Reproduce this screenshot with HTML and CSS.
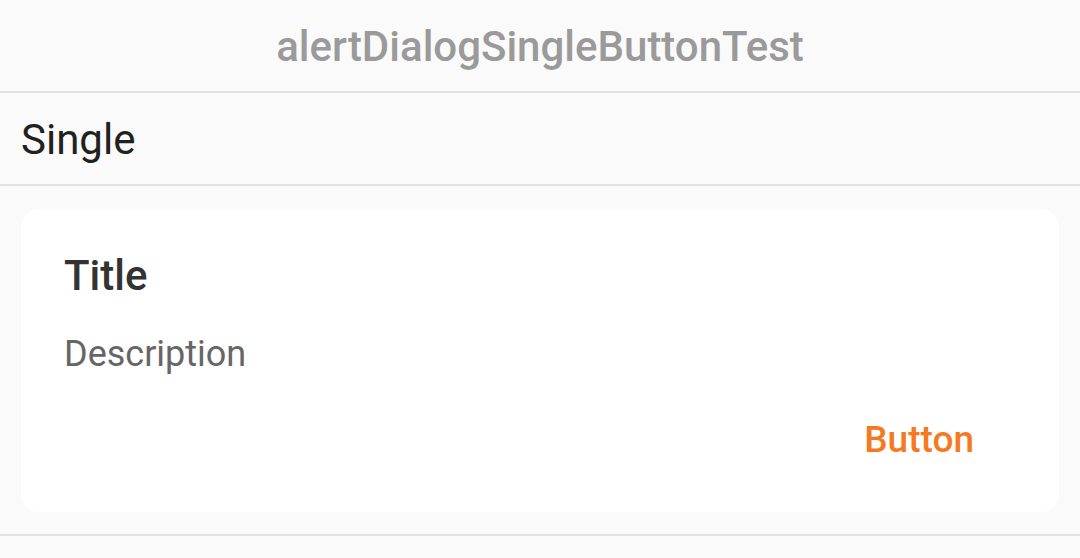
FILE: index.html
```html
<!DOCTYPE html>
<html>
<head>
<meta charset="utf-8">
<link rel="stylesheet" href="styles.css">
</head>
<body>
<div class="app">
  <header class="topbar">alertDialogSingleButtonTest</header>
  <div class="row">Single</div>
  <div class="section">
    <div class="card">
      <div class="title">Title</div>
      <div class="desc">Description</div>
      <div class="actions"><span class="btn">Button</span></div>
    </div>
  </div>
</div>
</body>
</html>
```
FILE: styles.css
```css
html, body {
  margin: 0;
  padding: 0;
  background: #fafafa;
  font-family: Roboto, "Noto Sans", sans-serif;
}
.app {
  width: 1080px;
  height: 558px;
  overflow: hidden;
}
.topbar {
  height: 89px;
  padding-top: 2px;
  border-bottom: 2px solid #e2e2e2;
  display: flex;
  align-items: center;
  justify-content: center;
  font-size: 42px;
  font-weight: 500;
  color: #9a9a9a;
}
.row {
  height: 90px;
  padding: 1px 0 0 21px;
  border-bottom: 2px solid #e2e2e2;
  display: flex;
  align-items: center;
  font-size: 42px;
  color: #212121;
}
.section {
  padding: 23px 21px 22px;
  border-bottom: 2px solid #e2e2e2;
}
.card {
  background: #fff;
  border-radius: 18px;
  height: 303px;
  box-sizing: border-box;
  padding: 42px 85px 0 43px;
  display: flex;
  flex-direction: column;
}
.title {
  font-size: 42px;
  font-weight: 500;
  color: #333;
  line-height: 50px;
}
.desc {
  margin-top: 31px;
  font-size: 36px;
  color: #666;
  line-height: 44px;
}
.actions {
  display: flex;
  justify-content: flex-end;
  margin-top: 41px;
}
.btn {
  font-size: 37px;
  font-weight: 500;
  color: #f5791f;
  line-height: 46px;
}
```
